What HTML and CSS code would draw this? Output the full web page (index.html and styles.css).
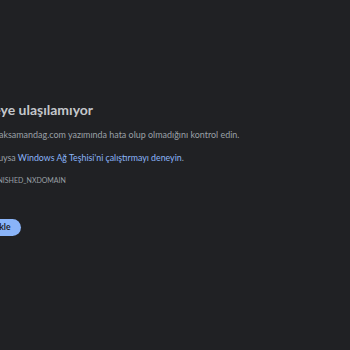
FILE: index.html
```html
<!DOCTYPE html>
<html>
	<head>
		<meta charset="UTF-8">
		<title>aksamandag.com</title>
		<link rel="stylesheet" href="styles.css">
	</head>
	<body>
		<div class="wrapper">
			<div class="content">
				<h1 class="title">Bu siteye ulaşılamıyor</h1>
				<p class="tip tip-first">www.aksamandag.com yazımında hata olup olmadığını kontrol edin.</p>
				<p class="tip tip-second">Yazım doğruysa <a href="javascript:;" class="link">Windows Ağ Teşhisi'ni çalıştırmayı deneyin</a>.</p>
				<div class="error-code">DNS_PROBE_FINISHED_NXDOMAIN</div>
				<div class="buttons">
					<button class="reload">Yeniden yükle</button>
				</div>
			</div>
		</div>
	</body>
</html>
```

FILE: styles.css
```css
html, body {
	margin: 0;
	padding: 0;
	height: 100%;
}
body {
	background: #202124;
	font-family: "Lato", "Open Sans", sans-serif;
	color: #9aa0a6;
	overflow: hidden;
}
.wrapper {
	padding-top: 100px;
}
.content {
	margin-left: -42px;
}
.title {
	margin: 0;
	font-size: 14px;
	line-height: 20px;
	font-weight: 700;
	color: #c4c7cb;
}
.tip {
	margin: 0;
	font-size: 8.8px;
	line-height: 23px;
}
.tip-first {
	margin-top: 3px;
	margin-left: 18px;
	font-size: 8.95px;
}
.tip-second {
	margin-left: -2px;
}
.link {
	color: #8ab4f8;
	text-decoration: none;
}
.error-code {
	margin-left: -10px;
	font-size: 7px;
	line-height: 23px;
	text-transform: uppercase;
}
.buttons {
	margin-top: 22px;
	margin-left: -10px;
}
.reload {
	background: #8ab4f8;
	color: #202124;
	border: 0;
	border-radius: 9px;
	padding: 0 10px;
	height: 17px;
	font-family: inherit;
	font-size: 8.5px;
	font-weight: 700;
}
```
